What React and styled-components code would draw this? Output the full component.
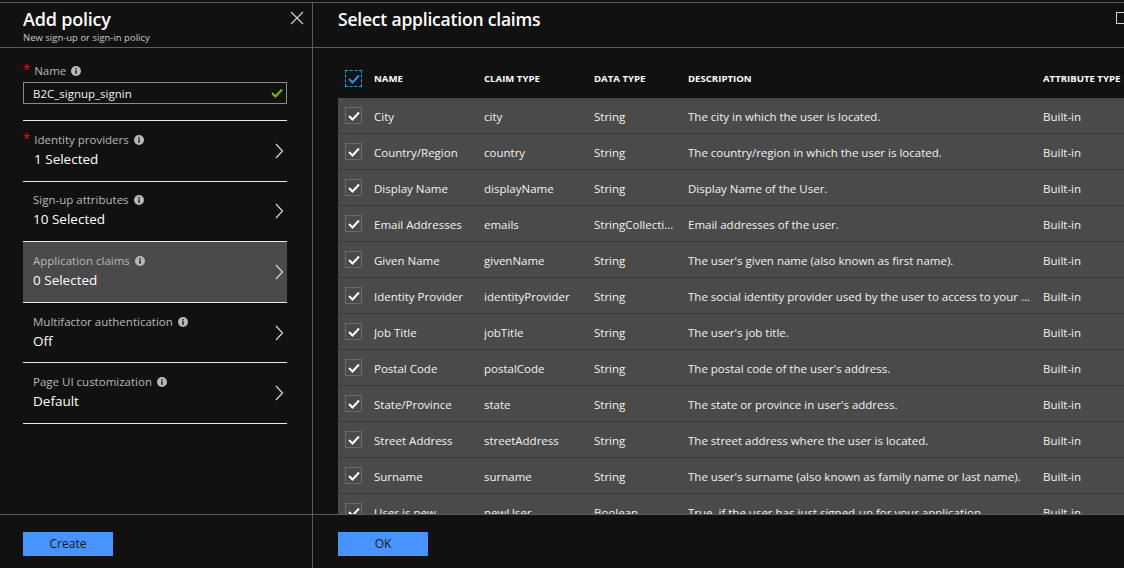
import React from 'react';
import styled, { createGlobalStyle } from 'styled-components';

const GlobalStyle = createGlobalStyle`
  html, body {
    margin: 0;
    padding: 0;
    background: #111111;
  }
  body {
    font-family: "Open Sans", "Noto Sans", sans-serif;
    color: #ffffff;
  }
  * { box-sizing: border-box; }
`;

const Shell = styled.div`
  display: flex;
  height: 568px;
  width: 1124px;
  padding-top: 2px;
  overflow: hidden;
  background: #111111;
`;

const Blade = styled.section`
  display: flex;
  flex-direction: column;
  width: ${(p) => p.width || 'auto'};
  flex: ${(p) => (p.grow ? '1' : 'none')};
  border-top: 1px solid #5c5c5c;
  border-right: ${(p) => (p.divider ? '1px solid #5c5c5c' : 'none')};
  min-width: 0;
  overflow: hidden;
`;

const BladeHeader = styled.header`
  display: flex;
  align-items: flex-start;
  justify-content: space-between;
  height: 45px;
  padding: 4px 16px 0 ${(p) => p.left || 23}px;
  border-bottom: 1px solid #5c5c5c;
  flex: none;
`;

const TitleBlock = styled.div`
  display: flex;
  flex-direction: column;
`;

const Title = styled.h1`
  margin: 0;
  font-size: ${(p) => p.size || 18}px;
  line-height: 24px;
  font-weight: 600;
  letter-spacing: -0.2px;
  color: #ffffff;
`;

const Subtitle = styled.div`
  font-size: 9.5px;
  line-height: 12px;
  color: #c8c8c8;
  margin-top: 1px;
`;

const IconButton = styled.button`
  background: none;
  border: none;
  padding: 0;
  margin: ${(p) => p.margin || '6px -2px 0 0'};
  display: flex;
  cursor: pointer;
`;

const BladeBody = styled.div`
  flex: 1;
  min-height: 0;
  overflow: hidden;
`;

const BladeFooter = styled.footer`
  flex: none;
  height: 54px;
  border-top: 1px solid #5c5c5c;
  padding: 16px 0 0 ${(p) => p.left || 23}px;
`;

const PrimaryButton = styled.button`
  width: 90px;
  height: 24px;
  border: none;
  background: #4894fe;
  color: #141414;
  font-family: inherit;
  font-size: 12px;
  padding: 0;
  cursor: pointer;
`;

const FieldLabel = styled.div`
  display: flex;
  align-items: center;
  gap: 5px;
  font-size: 11.5px;
  line-height: 16px;
  color: #b8b8b8;
`;

const Required = styled.span`
  color: #e81123;
  font-size: 13px;
  margin-right: -1px;
  align-self: flex-start;
  line-height: 12px;
`;

const NameField = styled.div`
  padding: 15px 0 16px 0;
  margin: 0 25px 0 23px;
  border-bottom: 1px solid #e8e8e8;
`;

const InputBox = styled.div`
  display: flex;
  align-items: center;
  justify-content: space-between;
  margin-top: 3px;
  height: 22px;
  border: 1px solid #8a8a8a;
  padding: 0 3px 0 9px;
  font-size: 11.5px;
  color: #f2f2f2;
`;

const List = styled.div`
  margin: 0 25px 0 23px;
`;

const Item = styled.div`
  display: flex;
  align-items: center;
  justify-content: space-between;
  height: 60.6px;
  padding: 0 3px 0 ${(p) => (p.required ? 0 : 10)}px;
  border-bottom: 1px solid #e8e8e8;
  background: ${(p) => (p.active ? '#4a4a4a' : 'transparent')};
`;

const ItemText = styled.div`
  display: flex;
  flex-direction: column;
  gap: 3px;
  padding-bottom: 2px;
`;

const ItemValue = styled.div`
  font-size: 13.5px;
  line-height: 17px;
  color: #ffffff;
  padding-left: ${(p) => (p.required ? 11 : 0)}px;
`;

const TableWrap = styled.div`
  padding: 12px 0 0 25px;
`;

const cols = '36px 110px 110px 94px 355px 1fr';

const HeadRow = styled.div`
  display: grid;
  grid-template-columns: ${cols};
  align-items: center;
  height: 38px;
  padding-bottom: 1px;
`;

const HeadCell = styled.div`
  font-size: 9.6px;
  font-weight: 700;
  color: #ffffff;
  white-space: nowrap;
  overflow: hidden;
`;

const Row = styled.div`
  display: grid;
  grid-template-columns: ${cols};
  align-items: center;
  height: 36px;
  background: #4a4a4a;
  border-bottom: 1px solid #3b3b3b;
`;

const Cell = styled.div`
  font-size: 11.5px;
  color: #f2f2f2;
  white-space: nowrap;
  overflow: hidden;
  text-overflow: ellipsis;
  padding: 2px 10px 0 0;
`;

const Check = styled.div`
  width: 17px;
  height: 17px;
  margin-left: 7px;
  display: flex;
  align-items: center;
  justify-content: center;
  border: 1px ${(p) => (p.focus ? 'dashed #1aa0e6' : 'solid #6c6c6c')};
`;

const InfoIcon = () => (
  <svg width="10" height="10" viewBox="0 0 10 10">
    <circle cx="5" cy="5" r="5" fill="#b8b8b8" />
    <rect x="4.3" y="4.2" width="1.4" height="3.6" fill="#111" />
    <rect x="4.3" y="2.1" width="1.4" height="1.4" fill="#111" />
  </svg>
);

const Chevron = () => (
  <svg width="10" height="16" viewBox="0 0 10 16">
    <polyline points="2,1 8.5,8 2,15" fill="none" stroke="#d8d8d8" strokeWidth="1.2" />
  </svg>
);

const CheckMark = ({ color = '#ffffff' }) => (
  <svg width="12" height="10" viewBox="0 0 12 10">
    <polyline points="1,5 4.5,8.5 11,1.5" fill="none" stroke={color} strokeWidth="2" />
  </svg>
);

const items = [
  { label: 'Identity providers', value: '1 Selected', required: true },
  { label: 'Sign-up attributes', value: '10 Selected' },
  { label: 'Application claims', value: '0 Selected', active: true },
  { label: 'Multifactor authentication', value: 'Off' },
  { label: 'Page UI customization', value: 'Default' },
];

const claims = [
  ['City', 'city', 'String', 'The city in which the user is located.'],
  ['Country/Region', 'country', 'String', 'The country/region in which the user is located.'],
  ['Display Name', 'displayName', 'String', 'Display Name of the User.'],
  ['Email Addresses', 'emails', 'StringCollection', 'Email addresses of the user.'],
  ['Given Name', 'givenName', 'String', "The user's given name (also known as first name)."],
  ['Identity Provider', 'identityProvider', 'String', 'The social identity provider used by the user to access to your application.'],
  ['Job Title', 'jobTitle', 'String', "The user's job title."],
  ['Postal Code', 'postalCode', 'String', "The postal code of the user's address."],
  ['State/Province', 'state', 'String', "The state or province in user's address."],
  ['Street Address', 'streetAddress', 'String', 'The street address where the user is located.'],
  ['Surname', 'surname', 'String', "The user's surname (also known as family name or last name)."],
  ['User is new', 'newUser', 'Boolean', 'True, if the user has just signed-up for your application.'],
];

export default function App() {
  return (
    <>
      <GlobalStyle />
      <Shell>
        <Blade width="313px" divider>
          <BladeHeader>
            <TitleBlock>
              <Title>Add policy</Title>
              <Subtitle>New sign-up or sign-in policy</Subtitle>
            </TitleBlock>
            <IconButton aria-label="Close" margin="4px -8px 0 0">
              <svg width="14" height="14" viewBox="0 0 14 14">
                <path d="M1 1 L13 13 M13 1 L1 13" stroke="#d0d0d0" strokeWidth="1.2" />
              </svg>
            </IconButton>
          </BladeHeader>
          <BladeBody>
            <NameField>
              <FieldLabel>
                <Required>*</Required>
                Name
                <InfoIcon />
              </FieldLabel>
              <InputBox>
                B2C_signup_signin
                <CheckMark color="#7fba00" />
              </InputBox>
            </NameField>
            <List>
              {items.map((it) => (
                <Item key={it.label} active={it.active} required={it.required}>
                  <ItemText>
                    <FieldLabel>
                      {it.required && <Required>*</Required>}
                      {it.label}
                      <InfoIcon />
                    </FieldLabel>
                    <ItemValue required={it.required}>{it.value}</ItemValue>
                  </ItemText>
                  <Chevron />
                </Item>
              ))}
            </List>
          </BladeBody>
          <BladeFooter>
            <PrimaryButton>Create</PrimaryButton>
          </BladeFooter>
        </Blade>

        <Blade grow>
          <BladeHeader left={25}>
            <Title size={17.5}>Select application claims</Title>
            <IconButton aria-label="Maximize" margin="5px -20px 0 0">
              <svg width="12" height="12" viewBox="0 0 12 12">
                <rect x="0.5" y="0.5" width="11" height="11" fill="none" stroke="#d0d0d0" strokeWidth="1" />
              </svg>
            </IconButton>
          </BladeHeader>
          <BladeBody>
            <TableWrap>
              <HeadRow>
                <Check focus>
                  <CheckMark color="#2b8ef0" />
                </Check>
                <HeadCell>NAME</HeadCell>
                <HeadCell>CLAIM TYPE</HeadCell>
                <HeadCell>DATA TYPE</HeadCell>
                <HeadCell>DESCRIPTION</HeadCell>
                <HeadCell>ATTRIBUTE TYPE</HeadCell>
              </HeadRow>
              {claims.map((c) => (
                <Row key={c[1]}>
                  <Check>
                    <CheckMark />
                  </Check>
                  <Cell>{c[0]}</Cell>
                  <Cell>{c[1]}</Cell>
                  <Cell>{c[2]}</Cell>
                  <Cell>{c[3]}</Cell>
                  <Cell>Built-in</Cell>
                </Row>
              ))}
            </TableWrap>
          </BladeBody>
          <BladeFooter left={25}>
            <PrimaryButton>OK</PrimaryButton>
          </BladeFooter>
        </Blade>
      </Shell>
    </>
  );
}
